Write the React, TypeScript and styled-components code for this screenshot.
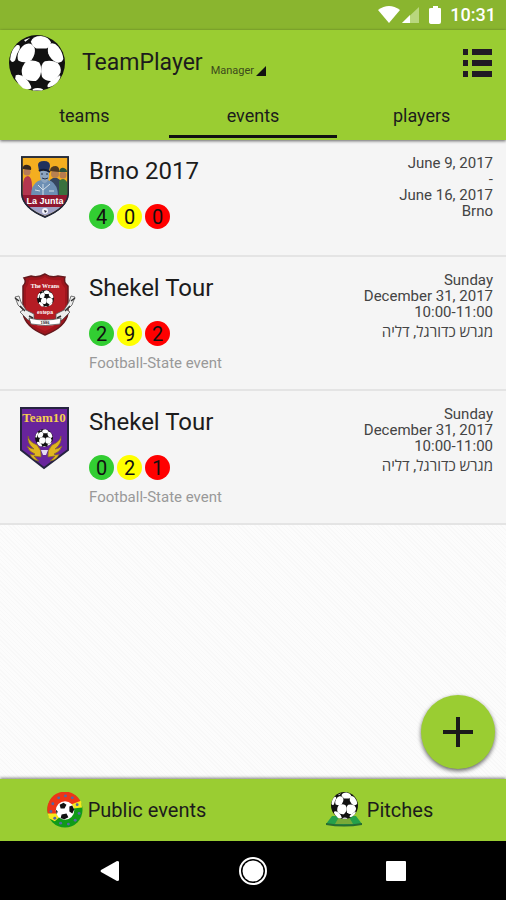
import React, { useState } from "react";
import styled, { createGlobalStyle } from "styled-components";

const lime = "#9acd32";

const GlobalStyle = createGlobalStyle`
  * { box-sizing: border-box; }
  body { margin: 0; font-family: Roboto, "Open Sans", "Liberation Sans", sans-serif; color: #1c1c1c; }
  button { border: 0; padding: 0; background: none; font: inherit; color: inherit; cursor: pointer; }
  a { color: inherit; text-decoration: none; }
  ul { margin: 0; padding: 0; list-style: none; }
  h1, h2, p { margin: 0; font-weight: 400; }
  svg { display: block; }
`;

const Page = styled.div`
  min-height: 100vh;
  display: flex;
  flex-direction: column;
  background: #fafafa;
`;

const StatusBar = styled.div`
  height: 30px;
  padding: 0 10px;
  display: flex;
  align-items: center;
  justify-content: flex-end;
  background: #8ab52f;
  color: #fff;
  font-size: 18px;
  font-weight: 500;
  line-height: 32px;
`;

const Clock = styled.span`
  margin-left: 8px;
`;

const Header = styled.header`
  position: relative;
  z-index: 1;
  background: ${lime};
  box-shadow: 0 1px 3px rgba(0, 0, 0, 0.6);
`;

const TitleBar = styled.div`
  height: 66px;
  padding: 0 13px 0 9px;
  display: flex;
  align-items: center;
`;

const AppTitle = styled.h1`
  margin-left: 17px;
  font-size: 23px;
  line-height: 30px;
`;

const RoleButton = styled.button`
  margin: 16px auto 0 8px;
  display: flex;
  align-items: center;
  gap: 2px;
  color: #3c4a1c;
  font-size: 11px;
  line-height: 14px;
`;

const Tabs = styled.nav`
  display: grid;
  grid-template-columns: repeat(3, 1fr);
`;

const Tab = styled.button<{ $active: boolean }>`
  height: 42px;
  border-bottom: 3px solid ${(p) => (p.$active ? "#111" : "transparent")};
  margin-bottom: 2px;
  font-size: 18px;
  line-height: 24px;
`;

const Main = styled.main`
  position: relative;
  flex: 1;
  background: repeating-linear-gradient(45deg, #fcfcfc 0, #fcfcfc 2px, #f8f8f8 2px, #f8f8f8 3px);
`;

const EventRow = styled.li`
  min-height: 117px;
  display: flex;
  background: #f5f5f5;
  border-bottom: 2px solid #e4e4e4;
`;

const Crest = styled.div`
  width: 89px;
  padding-top: 16px;
  display: flex;
  justify-content: center;
  align-items: flex-start;
  flex: none;
`;

const EventBody = styled.div`
  flex: 1;
  padding: 16px 0 17px;
`;

const EventTitle = styled.h2`
  font-size: 24px;
  line-height: 30px;
`;

const Counts = styled.div`
  margin-top: 18px;
  display: flex;
  gap: 3px;
`;

const Count = styled.span<{ $color: string }>`
  width: 25px;
  height: 25px;
  border-radius: 50%;
  background: ${(p) => p.$color};
  color: #111;
  font-size: 20px;
  line-height: 26px;
  text-align: center;
`;

const Category = styled.p`
  margin-top: 8px;
  color: #999;
  font-size: 15px;
  line-height: 18px;
`;

const Details = styled.div`
  padding: 15px 13px 0 0;
  text-align: right;
  color: #444;
  font-size: 15px;
  line-height: 16px;
`;

const HebrewPlace = styled.p`
  line-height: 24px;
`;

const AddButton = styled.button`
  position: absolute;
  right: 11px;
  bottom: 10px;
  width: 74px;
  height: 74px;
  border-radius: 50%;
  display: grid;
  place-items: center;
  background: ${lime};
  box-shadow: 0 2px 4px rgba(0, 0, 0, 0.6);
`;

const BottomBar = styled.nav`
  position: relative;
  height: 62px;
  display: grid;
  grid-template-columns: 1fr 1fr;
  background: ${lime};
  box-shadow: 0 -1px 3px rgba(0, 0, 0, 0.5);
  font-size: 20px;
`;

const BottomLink = styled.a`
  display: flex;
  align-items: center;
  justify-content: center;
  gap: 5px;
`;

const SystemBar = styled.div`
  height: 59px;
  padding: 0 38px;
  display: grid;
  grid-template-columns: repeat(3, 1fr);
  justify-items: center;
  align-items: center;
  background: #000;
`;

const BallArt = () => (
  <g>
    <circle cx="50" cy="50" r="50" fill="#111" />
    <g fill="#fff">
      <path d="M39 12Q42 2 57 2Q71 4 75 13Q73 22 67 24H49Q42 21 39 12Z" />
      <path d="M31 16Q41 13 46 24Q48 34 40 45Q30 52 17 46Q13 39 18 28Q24 18 31 16Z" />
      <path d="M72 16Q80 12 88 21Q96 31 97 43Q94 51 85 49Q74 44 70 33Q68 22 72 16Z" />
      <path d="M31 47Q44 43 54 49Q59 57 57 67Q56 77 48 82Q34 84 25 75Q21 66 24 57Q27 50 31 47Z" />
      <path d="M64 47Q76 44 87 50Q94 57 92 67Q87 78 77 82Q65 83 59 75Q56 66 58 56Q60 49 64 47Z" />
      <path d="M14 18Q21 16 19 25Q13 34 11 45Q6 52 2 44Q3 27 14 18Z" />
      <path d="M12 72Q20 69 29 77Q39 87 40 95Q35 99 25 95Q16 88 11 78Z" />
      <path d="M91 72Q94 75 86 85Q76 94 69 93Q67 88 75 82Q84 77 91 72Z" />
      <path d="M42 97Q51 92 61 97L59 99H43Z" />
      <path d="M27 9L38 5L29 12Z" />
    </g>
  </g>
);

const Ball = ({ size }: { size: number }) => (
  <svg width={size} height={size} viewBox="0 0 100 100" aria-hidden="true">
    <BallArt />
  </svg>
);

const LaJuntaCrest = () => (
  <svg width="48" height="62" viewBox="0 0 48 62" aria-hidden="true">
    <path d="M.8 1H47.200V38Q46 52 24 61Q2 52 .8 38Z" fill="#f4ae20" stroke="#222838" strokeWidth="1.500" />
    <path d="M2 30Q2 20 7 20Q11 21 11 30L12 40H2Z" fill="#b3364f" />
    <circle cx="6" cy="16" r="3.500" fill="#b77a58" />
    <path d="M1.500 13Q2 8 7 9Q11 10 10 14Z" fill="#372820" />
    <path d="M29 40V24Q34 19 39 24V40Z" fill="#35465f" />
    <circle cx="34" cy="18" r="4" fill="#b88150" />
    <path d="M29 15Q29 10 35 10Q39 11 38 16Z" fill="#4f3a22" />
    <path d="M38 40V25Q43 20 46.500 27V40Z" fill="#38713e" />
    <circle cx="42" cy="19" r="3.500" fill="#b77b4e" />
    <path d="M38 16Q39 11 43 12Q46 13 46 16Z" fill="#28533c" />
    <path d="M10 40Q10 29 17 25L23 23L30 25Q37 29 37 40Z" fill="#6d8fb4" />
    <path d="M19 15H28V21Q27 27 23 27Q19 25 19 20Z" fill="#8ca4bf" />
    <path d="M17 9Q17 5 23 5Q29 5 29 10L28 15Q23 12 18 15Z" fill="#1f315e" />
    <path d="M18 15Q23 12 29 16" stroke="#101b35" strokeWidth="2" fill="none" />
    <path d="M17 29L22 34L29 28M22 28V39M14 34L19 35M28 35H33" stroke="#d4dfe8" fill="none" />
    <path d="M20 18H22M25 18H27M21 22Q24 24 27 22" stroke="#253247" fill="none" />
    <path d="M1.500 39H46.500Q46 46 41 51H7Q2 46 1.500 39Z" fill="#8f1730" />
    <text x="24" y="48" textAnchor="middle" fontFamily="Liberation Sans, sans-serif" fontSize="9" fontWeight="700" fill="#fff">La Junta</text>
    <path d="M8 51H40Q34 56 24 60Q14 56 8 51Z" fill="#9fa2c6" />
    <circle cx="24" cy="55" r="3" fill="#f4f4fb" />
    <path d="M23 54L26 55L24 57Z" fill="#223" />
    <path d="M.8 1H47.200V38Q46 52 24 61Q2 52 .8 38Z" fill="none" stroke="#222838" strokeWidth="1.500" />
  </svg>
);

const RedCrest = () => (
  <svg width="62" height="63" viewBox="0 0 62 63" aria-hidden="true">
    <path d="M31 1Q37 5 44 3L51 4Q49 9 54 13V40Q52 54 31 62Q11 54 9 40V13Q13 9 10 5L17 3Q24 5 31 1Z" fill="#9f151d" stroke="#64191d" strokeWidth="1.500" />
    <path d="M31 4Q37 8 47 7Q47 11 51 15V40Q48 51 31 58Q14 52 12 40V15Q15 11 15 7Q25 8 31 4Z" fill="#b51c24" />
    <text x="31" y="15" textAnchor="middle" fontFamily="Liberation Serif, serif" fontSize="6" fontWeight="700" fill="#fff">The Wrans</text>
    <svg x="23" y="17" width="17" height="17" viewBox="0 0 100 100"><BallArt /></svg>
    <text x="31" y="41" textAnchor="middle" fontFamily="Liberation Sans, sans-serif" fontSize="5" fontWeight="700" fill="#fff">estepa</text>
    <g fill="#eee" stroke="#555" strokeWidth=".8">
      <path d="M1 24L5 23L7 29L12 37L20 41V47H14L6 39L9 37L4 32Z" />
      <path d="M61 24L57 23L55 29L50 37L42 41V47H48L56 39L53 37L58 32Z" />
      <path d="M15 45Q31 49 47 45L46 51Q31 54 17 51Z" fill="#fff" />
    </g>
    <path d="M1 25L5 28M6 33L11 38M61 25L57 28M56 33L51 38M15 43L19 45M47 43L43 45" stroke="#333" strokeWidth="1.500" />
    <text x="31" y="51" textAnchor="middle" fontFamily="Liberation Sans, sans-serif" fontSize="4" fontWeight="700" fill="#222">1986</text>
  </svg>
);

const TeamTenCrest = () => (
  <svg width="49" height="63" viewBox="0 0 49 63" aria-hidden="true">
    <path d="M1 1H48V43L24 61L1 43Z" fill="#68249c" stroke="#252440" strokeWidth="2" />
    <text x="24" y="15" textAnchor="middle" fontFamily="Liberation Serif, serif" fontSize="13" fontWeight="700" fill="#f5ce4f">Team10</text>
    <g fill="#e0b51f" stroke="#826b21" strokeWidth=".7">
      <path d="M8 29Q9 35 17 38Q22 43 21 50L14 49Q17 53 19 54Q12 53 10 47Q14 49 15 47Q9 45 7 39Q11 42 14 42Q7 37 8 29Z" />
      <path d="M41 29Q40 35 32 38Q27 43 28 50L35 49Q32 53 30 54Q37 53 39 47Q35 49 34 47Q40 45 42 39Q38 42 35 42Q42 37 41 29Z" />
    </g>
    <svg x="15" y="22" width="18" height="18" viewBox="0 0 100 100"><BallArt /></svg>
    <path d="M21 43H28L26 48H23Z" fill="#e7daf3" />
  </svg>
);

const PublicIcon = () => (
  <svg width="36" height="36" viewBox="0 0 37 37" aria-hidden="true">
    <circle cx="18.500" cy="18.500" r="18" fill="#109b19" />
    <path d="M.8 22A18 18 0 0 1 35 11L27 15Q14 18 9 24Z" fill="#ed3517" />
    <path d="M.8 22L11 22Q16 15 24 13L35 9L36 16L27 17L14 25L8 30L2 27Z" fill="#f6e91c" />
    <g fill="#5369a5">
      <circle cx="12" cy="6" r="1.500" /><circle cx="19" cy="4" r="1.500" /><circle cx="26" cy="6" r="1.500" />
      <circle cx="6" cy="12" r="1.500" /><circle cx="4" cy="20" r="1.500" /><circle cx="31" cy="13" r="1.500" />
      <circle cx="33" cy="22" r="1.500" /><circle cx="29" cy="29" r="1.500" /><circle cx="22" cy="33" r="1.500" />
      <circle cx="14" cy="32" r="1.500" /><circle cx="8" cy="27" r="1.500" />
    </g>
    <circle cx="18.500" cy="19" r="9.500" fill="#fff" />
    <path d="M13 13L17 11L20 13L18 17L14 17ZM23 15L26 14L28 18L26 22L23 20ZM15 23L20 22L22 26L18 28L14 27ZM9 18L11 20L10 23Z" fill="#111" />
  </svg>
);

const PitchIcon = () => (
  <svg width="36" height="36" viewBox="0 0 36 36" aria-hidden="true">
    <path d="M6 24H30L36 32Q18 35 0 32Z" fill="#25a04a" />
    <path d="M0 31Q18 34 36 31V33Q18 36 0 33Z" fill="#286b32" />
    <path d="M13 25H23L27 32H9Z" fill="#79aa38" />
    <svg x="5" y="0" width="27" height="27" viewBox="0 0 100 100"><BallArt /></svg>
  </svg>
);

const colors = ["#32cd32", "#ffff00", "#ff0000"];

type Event = {
  title: string;
  counts: number[];
  category?: string;
  lines: string[];
  hebrewPlace?: string;
  crest: React.ReactNode;
};

const events: Event[] = [
  { title: "Brno 2017", counts: [4, 0, 0], lines: ["June 9, 2017", "-", "June 16, 2017", "Brno"], crest: <LaJuntaCrest /> },
  {
    title: "Shekel Tour", counts: [2, 9, 2], category: "Football-State event",
    lines: ["Sunday", "December 31, 2017", "10:00-11:00"], hebrewPlace: "מגרש כדורגל, דליה", crest: <RedCrest />,
  },
  {
    title: "Shekel Tour", counts: [0, 2, 1], category: "Football-State event",
    lines: ["Sunday", "December 31, 2017", "10:00-11:00"], hebrewPlace: "מגרש כדורגל, דליה", crest: <TeamTenCrest />,
  },
];

export default function App() {
  const [active, setActive] = useState("events");
  return (
    <Page>
      <GlobalStyle />
      <StatusBar>
        <svg width="64" height="20" viewBox="0 0 64 20" aria-hidden="true">
          <path d="M0 5Q11-3 22 5L11 18Z" fill="#fff" />
          <path d="M41 2V18H24Z" fill="#b9d77e" />
          <path d="M32 10V18H24Z" fill="#fff" />
          <path d="M55 1H60V3H62Q63 3 63 4V17Q63 19 61 19H54Q51 19 51 17V4Q51 3 53 3H55Z" fill="#fff" />
        </svg>
        <Clock>10:31</Clock>
      </StatusBar>
      <Header>
        <TitleBar>
          <Ball size={56} />
          <AppTitle>TeamPlayer</AppTitle>
          <RoleButton>
            Manager
            <svg width="10" height="10" viewBox="0 0 10 10" aria-hidden="true"><path d="M10 0V10H0Z" fill="#111" /></svg>
          </RoleButton>
          <button aria-label="Menu">
            <svg width="31" height="30" viewBox="0 0 31 30" fill="#211a24" aria-hidden="true">
              <path d="M1 1H6V7H1ZM10 1H30V7H10ZM1 12H6V18H1ZM10 12H30V18H10ZM1 23H6V29H1ZM10 23H30V29H10Z" />
            </svg>
          </button>
        </TitleBar>
        <Tabs>
          {["teams", "events", "players"].map((name) => (
            <Tab key={name} $active={active === name} onClick={() => setActive(name)}>{name}</Tab>
          ))}
        </Tabs>
      </Header>
      <Main>
        <ul>
          {events.map((event, i) => (
            <EventRow key={i}>
              <Crest>{event.crest}</Crest>
              <EventBody>
                <EventTitle>{event.title}</EventTitle>
                <Counts>
                  {event.counts.map((n, k) => <Count key={k} $color={colors[k]}>{n}</Count>)}
                </Counts>
                {event.category && <Category>{event.category}</Category>}
              </EventBody>
              <Details>
                {event.lines.map((line) => <p key={line}>{line}</p>)}
                {event.hebrewPlace && <HebrewPlace dir="rtl" lang="he">{event.hebrewPlace}</HebrewPlace>}
              </Details>
            </EventRow>
          ))}
        </ul>
        <AddButton aria-label="Add event">
          <svg width="30" height="30" viewBox="0 0 30 30" aria-hidden="true">
            <path d="M15 0V30M0 15H30" stroke="#1a1a1a" strokeWidth="4" />
          </svg>
        </AddButton>
      </Main>
      <BottomBar>
        <BottomLink href="#public"><PublicIcon />Public events</BottomLink>
        <BottomLink href="#pitches"><PitchIcon />Pitches</BottomLink>
      </BottomBar>
      <SystemBar>
        <button aria-label="Back">
          <svg width="20" height="22" viewBox="0 0 20 22" aria-hidden="true"><path d="M1 10Q0 11 1 12L17 21Q19 21 19 20V2Q19 1 17 1Z" fill="#fff" /></svg>
        </button>
        <button aria-label="Home">
          <svg width="30" height="30" viewBox="0 0 30 30" aria-hidden="true"><circle cx="15" cy="15" r="13" fill="none" stroke="#fff" strokeWidth="2" /><circle cx="15" cy="15" r="10.500" fill="#fff" /></svg>
        </button>
        <button aria-label="Recent apps">
          <svg width="20" height="20" viewBox="0 0 20 20" aria-hidden="true"><rect width="20" height="20" rx="1" fill="#fff" /></svg>
        </button>
      </SystemBar>
    </Page>
  );
}
